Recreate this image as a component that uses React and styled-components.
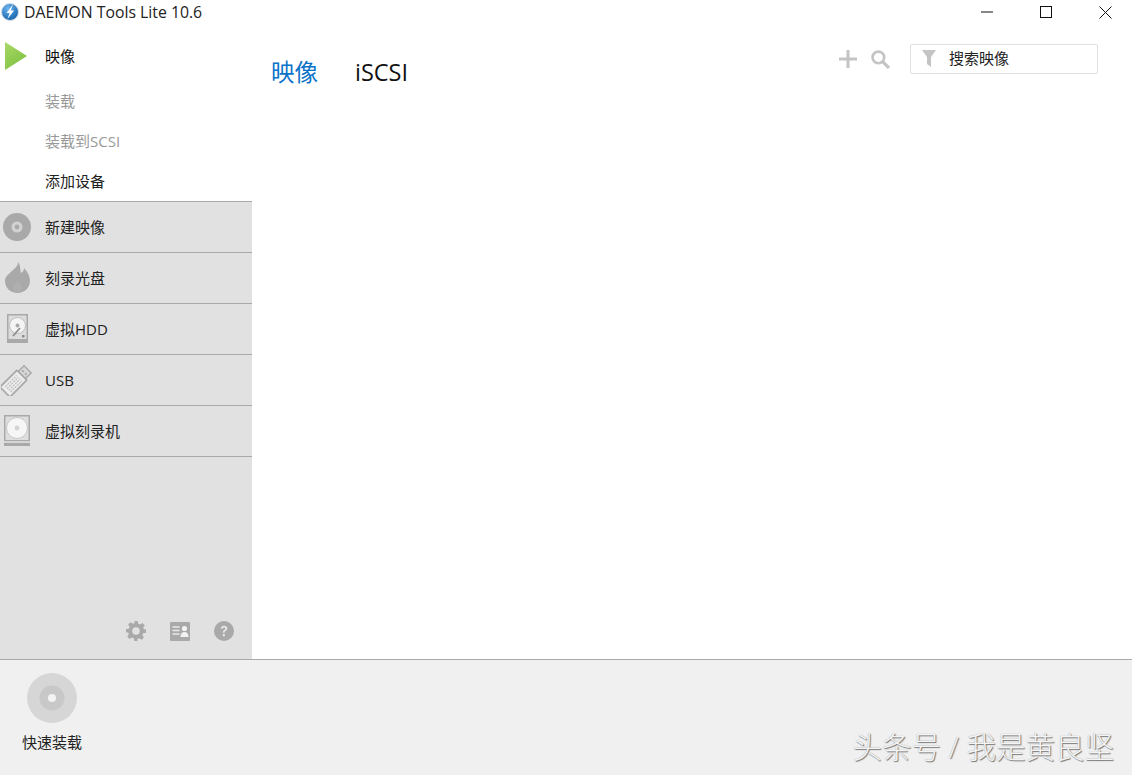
import React from "react";
import styled, { createGlobalStyle } from "styled-components";

const Global = createGlobalStyle`
  html, body { margin: 0; padding: 0; background: #fff; overflow: hidden; }
  #root { width: 1132px; height: 775px; }
  * { box-sizing: border-box; }
`;
const FONT = `"Open Sans", "Noto Sans CJK SC", sans-serif`;

const Window = styled.div`
  width: 1132px; height: 775px; display: flex; flex-direction: column;
  font-family: ${FONT}; color: #111; font-size: 15px; background: #fff;
`;
const TitleBar = styled.div`
  height: 27px; flex: none; display: flex; align-items: flex-start; padding-left: 1px;
`;
const AppTitle = styled.span`
  margin-left: 5px; font-size: 15.8px; line-height: 24px; color: #222;
`;
const WinButtons = styled.div`
  margin-left: auto; display: flex; height: 24px; align-items: center; gap: 13px; padding-right: 4px;
`;
const WinButton = styled.div`
  width: 46px; display: flex; justify-content: center; align-items: center; height: 24px;
`;
const Main = styled.div`
  flex: 1; display: flex; min-height: 0;
`;
const Sidebar = styled.div`
  width: 252px; flex: none; display: flex; flex-direction: column; background: #e1e1e1;
`;
const TopGroup = styled.div`
  background: #fff; height: 174px; display: flex; flex-direction: column;
`;
const ActionHead = styled.div`
  height: 54px; display: flex; align-items: center; padding: 4px 0 0 5px; gap: 18px;
  line-height: 20px;
`;
const ActionItem = styled.div`
  height: 40px; display: flex; align-items: center; padding: 0 0 1px 45px; line-height: 20px;
  color: ${(p) => (p.$disabled ? "#999" : "#222")};
`;
const NavRow = styled.div`
  height: 51px; display: flex; align-items: center; border-top: 1px solid #a9a9a9;
  color: #222; line-height: 20px; padding-bottom: 1px;
`;
const NavIcon = styled.div`
  width: 34px; margin-right: 11px; flex: none; display: flex; justify-content: center; align-items: center;
`;
const NavEnd = styled.div`
  border-top: 1px solid #a9a9a9;
`;
const SideTools = styled.div`
  margin-top: auto; display: flex; justify-content: flex-end; gap: 24px; padding: 0 18px 18px 0; align-items: center;
`;
const Content = styled.div`
  flex: 1; display: flex; align-items: flex-start; padding: 16px 34px 0 19px;
`;
const Tabs = styled.div`
  display: flex; gap: 37px; align-items: center; height: 58px;
`;
const Tab = styled.div`
  font-size: 23.5px; line-height: 58px; color: ${(p) => (p.$active ? "#0a72c9" : "#111")};
`;
const Tools = styled.div`
  margin-left: auto; display: flex; align-items: center; gap: 10px; height: 30px; margin-top: 1px;
`;
const ToolBtn = styled.div`
  width: 22px; height: 22px; display: flex; justify-content: center; align-items: center;
`;
const Search = styled.div`
  width: 188px; height: 30px; margin-left: 9px; border: 1px solid #e0e0e0; border-radius: 2px;
  display: flex; align-items: center; padding: 0 0 2px 11px; gap: 13px; color: #222; background: #fff;
  line-height: 20px;
`;
const Footer = styled.div`
  height: 116px; flex: none; background: #f0f0f0; border-top: 1px solid #a9a9a9; display: flex;
  position: relative; justify-content: space-between;
`;
const QuickMount = styled.div`
  width: 104px; display: flex; flex-direction: column; align-items: center; padding-top: 13px; gap: 9px;
  color: #222; line-height: 20px;
`;
const Watermark = styled.div`
  align-self: flex-end; margin: 0 18px 10px 0; font-size: 29.5px; line-height: 36px; color: #f4f4f4;
  text-shadow: 1px 1px 1px #777, 0 0 1px #999; font-weight: 300; white-space: nowrap;
`;

const G = "#a9a9a9";

const AppLogo = () => (
  <svg width="18" height="24" viewBox="0 0 18 24">
    <defs>
      <radialGradient id="lg" cx="0.4" cy="0.3" r="0.75">
        <stop offset="0" stopColor="#6fb6f0" />
        <stop offset="1" stopColor="#0f5ea8" />
      </radialGradient>
    </defs>
    <circle cx="9" cy="12" r="8.500" fill="url(#lg)" stroke="#d5dce4" strokeWidth="1" />
    <path d="M12 4.500 L5.500 13 L8.600 13 L6.500 19 L13 10.500 L9.800 10.500 Z" fill="#fff" />
  </svg>
);
const Play = () => (
  <svg width="22" height="28" viewBox="0 0 22 28">
    <defs>
      <linearGradient id="pg" x1="0" y1="0" x2="0.6" y2="1">
        <stop offset="0" stopColor="#a9d968" />
        <stop offset="1" stopColor="#7fc241" />
      </linearGradient>
    </defs>
    <path d="M0 0 L22 14 L0 28 Z" fill="url(#pg)" />
  </svg>
);
const Disc = () => (
  <svg width="28" height="28" viewBox="0 0 28 28">
    <circle cx="14" cy="14" r="14" fill={G} />
    <circle cx="14" cy="14" r="5.500" fill="#d2d2d2" />
    <circle cx="14" cy="14" r="2.400" fill={G} />
  </svg>
);
const Flame = () => (
  <svg width="25" height="31" viewBox="0 0 25 31">
    <path d="M13 0 C16 4 15 8 16 11 C18 10 19 8 19 6 C23 10 25 15 25 19 C25 26 19 31 12.500 31 C5.500 31 0 26 0 19 C0 14 4 12 7 9 C10 6.500 13 4 13 0 Z" fill={G} />
    <path d="M12.500 18 C13.500 21 17 22 17 25.500 C17 28 15 30 12.500 30 C10 30 8 28 8 25.500 C8 22 11.500 21 12.500 18 Z" fill="#afafaf" />
  </svg>
);
const Hdd = () => (
  <svg width="21" height="29" viewBox="0 0 21 29">
    <rect x="0.750" y="0.750" width="19.500" height="25" fill="#dcdcdc" stroke={G} strokeWidth="1.500" />
    <circle cx="10.500" cy="11.500" r="8" fill="#f4f4f4" stroke="#bdbdbd" />
    <circle cx="10.500" cy="11.500" r="2" fill={G} />
    <path d="M6 22 L13 14" stroke="#8d8d8d" strokeWidth="1.800" />
    <rect x="15" y="21" width="2.500" height="2.500" fill="#8d8d8d" />
    <rect x="0" y="26" width="21" height="3" fill={G} />
  </svg>
);
const Usb = () => (
  <svg width="32" height="32" viewBox="0 0 32 32">
    <g transform="rotate(-45 16 16)">
      <rect x="-1" y="9" width="24" height="14" rx="1" fill="#ececec" stroke={G} strokeWidth="1.800" />
      <path d="M3 12.500H19M3 15H19M3 17.500H19M3 20H19" stroke="#bcbcbc" strokeWidth="1.200" strokeDasharray="2 1" />
      <rect x="23" y="11" width="8" height="10" fill="#d8d8d8" stroke={G} strokeWidth="1.400" />
      <rect x="25.500" y="13" width="2" height="2" fill={G} />
      <rect x="25.500" y="17" width="2" height="2" fill={G} />
    </g>
  </svg>
);
const Burner = () => (
  <svg width="26" height="31" viewBox="0 0 26 31">
    <rect x="0.750" y="0.750" width="24.500" height="25" fill="#dedede" stroke={G} strokeWidth="1.500" />
    <circle cx="13" cy="13" r="10.500" fill="#f6f6f6" stroke="#c8c8c8" />
    <circle cx="13" cy="13" r="2.400" fill="#d4d4d4" />
    <rect x="0" y="26" width="26" height="2" fill="#d6d6d6" />
    <rect x="0" y="28" width="26" height="3" fill={G} />
  </svg>
);
const Gear = () => (
  <svg width="20" height="20" viewBox="0 0 24 24" fill={G} fillRule="evenodd">
    <path d="M10 0h4l.6 3.200 2.300 1 2.700-1.900 2.900 2.900-1.900 2.700 1 2.300L24 10v4l-3.400.6-1 2.300 1.900 2.800-2.900 2.900-2.700-1.900-2.300 1L14 24h-4l-.6-3.300-2.300-1-2.700 1.900-2.900-2.900 1.900-2.800-1-2.300L0 14v-4l3.400-.7 1-2.300-1.900-2.700 2.900-2.900 2.700 1.900 2.300-1L10 0Zm2 7.500a4.500 4.500 0 1 0 0 9 4.500 4.500 0 0 0 0-9Z" />
  </svg>
);
const Contact = () => (
  <svg width="20" height="19" viewBox="0 0 20 19">
    <rect width="20" height="19" rx="1" fill={G} />
    <path d="M2.500 5h7M2.500 8.500h7M2.500 12h7" stroke="#e9e9e9" strokeWidth="1.500" />
    <circle cx="14.500" cy="6.500" r="2.600" fill="#f2f2f2" />
    <path d="M10.500 15c0-3.500 1.500-5 4-5s4 1.500 4 5Z" fill="#f2f2f2" />
  </svg>
);
const Help = () => (
  <svg width="20" height="20" viewBox="0 0 20 20">
    <circle cx="10" cy="10" r="10" fill={G} />
    <path d="M6.800 7.600C6.900 5.700 8.200 4.700 10.100 4.700c1.900 0 3.200 1.100 3.200 2.700 0 1.300-.8 2-1.700 2.600-.8.500-1 .8-1 1.700H8.900c-.1-1.500.4-2.100 1.300-2.700.7-.5 1.100-.8 1.100-1.500 0-.7-.5-1.100-1.200-1.100-.8 0-1.300.5-1.400 1.300Z" fill="#e8e8e8" />
    <rect x="8.800" y="13" width="2" height="2.200" fill="#e8e8e8" />
  </svg>
);
const Plus = () => (
  <svg width="18" height="18" viewBox="0 0 18 18">
    <path d="M9 0V18M0 9H18" stroke="#c4c4c4" strokeWidth="3" />
  </svg>
);
const Magnifier = () => (
  <svg width="19" height="19" viewBox="0 0 18 18" fill="none" stroke="#c4c4c4">
    <circle cx="7" cy="7" r="5.500" strokeWidth="2.500" />
    <path d="M11 11L17 17" strokeWidth="3" />
  </svg>
);
const Funnel = () => (
  <svg width="14" height="17" viewBox="0 0 14 17">
    <path d="M0 0H14L9 7V17L5 14V7Z" fill="#c4c4c4" />
  </svg>
);
const QuickDisc = () => (
  <svg width="50" height="50" viewBox="0 0 50 50">
    <circle cx="25" cy="25" r="25" fill="#d6d6d6" />
    <circle cx="25" cy="25" r="12.500" fill="#c8c8c8" />
    <circle cx="25" cy="25" r="4" fill="#f3f3f3" />
  </svg>
);

const actions = [
  { label: "装载", disabled: true },
  { label: "装载到SCSI", disabled: true },
  { label: "添加设备", disabled: false },
];
const navItems = [
  { label: "新建映像", Icon: Disc },
  { label: "刻录光盘", Icon: Flame },
  { label: "虚拟HDD", Icon: Hdd },
  { label: "USB", Icon: Usb },
  { label: "虚拟刻录机", Icon: Burner },
];

export default function App() {
  return (
    <Window>
      <Global />
      <TitleBar>
        <AppLogo />
        <AppTitle>DAEMON Tools Lite 10.6</AppTitle>
        <WinButtons>
          <WinButton>
            <svg width="12" height="2" viewBox="0 0 12 2"><path d="M0 1H12" stroke="#111" strokeWidth="1" /></svg>
          </WinButton>
          <WinButton>
            <svg width="12" height="12" viewBox="0 0 12 12"><rect x="0.500" y="0.500" width="11" height="11" fill="none" stroke="#111" /></svg>
          </WinButton>
          <WinButton>
            <svg width="13" height="13" viewBox="0 0 13 13"><path d="M0.500 0.500L12.500 12.500M12.500 0.500L0.500 12.500" stroke="#111" /></svg>
          </WinButton>
        </WinButtons>
      </TitleBar>
      <Main>
        <Sidebar>
          <TopGroup>
            <ActionHead><Play />映像</ActionHead>
            {actions.map((a) => (
              <ActionItem key={a.label} $disabled={a.disabled}>{a.label}</ActionItem>
            ))}
          </TopGroup>
          {navItems.map(({ label, Icon }) => (
            <NavRow key={label}>
              <NavIcon><Icon /></NavIcon>
              {label}
            </NavRow>
          ))}
          <NavEnd />
          <SideTools>
            <Gear />
            <Contact />
            <Help />
          </SideTools>
        </Sidebar>
        <Content>
          <Tabs>
            <Tab $active>映像</Tab>
            <Tab>iSCSI</Tab>
          </Tabs>
          <Tools>
            <ToolBtn><Plus /></ToolBtn>
            <ToolBtn><Magnifier /></ToolBtn>
            <Search><Funnel />搜索映像</Search>
          </Tools>
        </Content>
      </Main>
      <Footer>
        <QuickMount>
          <QuickDisc />
          快速装载
        </QuickMount>
        <Watermark>头条号 / 我是黄良坚</Watermark>
      </Footer>
    </Window>
  );
}
